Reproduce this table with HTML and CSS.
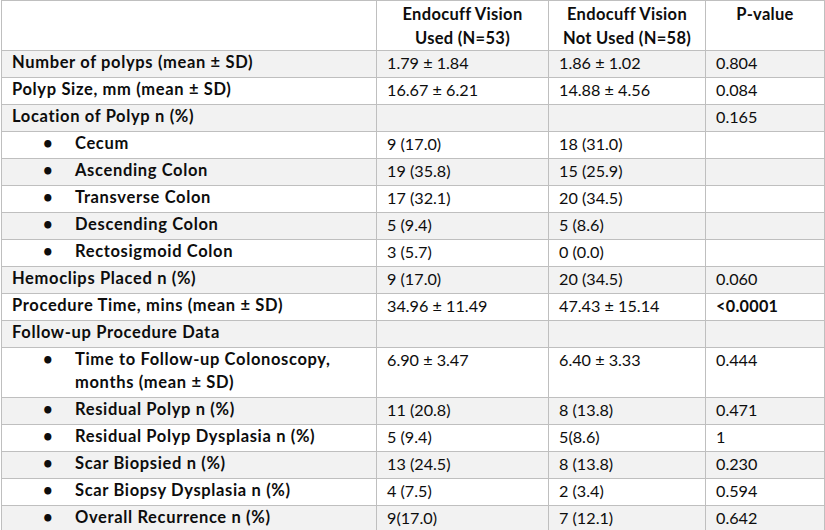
FILE: index.html
```html
<!DOCTYPE html>
<html>
<head>
<meta charset="utf-8">
<link rel="stylesheet" href="styles.css">
</head>
<body>
<table class="tbl">
  <colgroup>
    <col class="c1"><col class="c2"><col class="c3"><col class="c4">
  </colgroup>
  <thead>
    <tr class="head">
      <th></th>
      <th>Endocuff Vision<br>Used (N=53)</th>
      <th>Endocuff Vision<br>Not Used (N=58)</th>
      <th class="pv">P-value</th>
    </tr>
  </thead>
  <tbody>
    <tr class="alt"><td class="lbl">Number of polyps (mean ± SD)</td><td>1.79 ± 1.84</td><td>1.86 ± 1.02</td><td>0.804</td></tr>
    <tr><td class="lbl">Polyp Size, mm (mean ± SD)</td><td>16.67 ± 6.21</td><td>14.88 ± 4.56</td><td>0.084</td></tr>
    <tr class="alt"><td class="lbl">Location of Polyp n (%)</td><td></td><td></td><td>0.165</td></tr>
    <tr><td class="lbl"><div class="item"><span class="dot">•</span><span>Cecum</span></div></td><td>9 (17.0)</td><td>18 (31.0)</td><td></td></tr>
    <tr class="alt"><td class="lbl"><div class="item"><span class="dot">•</span><span>Ascending Colon</span></div></td><td>19 (35.8)</td><td>15 (25.9)</td><td></td></tr>
    <tr><td class="lbl"><div class="item"><span class="dot">•</span><span>Transverse Colon</span></div></td><td>17 (32.1)</td><td>20 (34.5)</td><td></td></tr>
    <tr class="alt"><td class="lbl"><div class="item"><span class="dot">•</span><span>Descending Colon</span></div></td><td>5 (9.4)</td><td>5 (8.6)</td><td></td></tr>
    <tr><td class="lbl"><div class="item"><span class="dot">•</span><span>Rectosigmoid Colon</span></div></td><td>3 (5.7)</td><td>0 (0.0)</td><td></td></tr>
    <tr class="alt"><td class="lbl">Hemoclips Placed n (%)</td><td>9 (17.0)</td><td>20 (34.5)</td><td>0.060</td></tr>
    <tr><td class="lbl">Procedure Time, mins (mean ± SD)</td><td>34.96 ± 11.49</td><td>47.43 ± 15.14</td><td class="b">&lt;0.0001</td></tr>
    <tr class="alt"><td class="lbl">Follow-up Procedure Data</td><td></td><td></td><td></td></tr>
    <tr><td class="lbl"><div class="item"><span class="dot">•</span><span>Time to Follow-up Colonoscopy,<br>months (mean ± SD)</span></div></td><td>6.90 ± 3.47</td><td>6.40 ± 3.33</td><td>0.444</td></tr>
    <tr class="alt"><td class="lbl"><div class="item"><span class="dot">•</span><span>Residual Polyp n (%)</span></div></td><td>11 (20.8)</td><td>8 (13.8)</td><td>0.471</td></tr>
    <tr><td class="lbl"><div class="item"><span class="dot">•</span><span>Residual Polyp Dysplasia n (%)</span></div></td><td>5 (9.4)</td><td>5(8.6)</td><td>1</td></tr>
    <tr class="alt"><td class="lbl"><div class="item"><span class="dot">•</span><span>Scar Biopsied n (%)</span></div></td><td>13 (24.5)</td><td>8 (13.8)</td><td>0.230</td></tr>
    <tr><td class="lbl"><div class="item"><span class="dot">•</span><span>Scar Biopsy Dysplasia n (%)</span></div></td><td>4 (7.5)</td><td>2 (3.4)</td><td>0.594</td></tr>
    <tr class="alt"><td class="lbl"><div class="item"><span class="dot">•</span><span>Overall Recurrence n (%)</span></div></td><td>9(17.0)</td><td>7 (12.1)</td><td>0.642</td></tr>
  </tbody>
</table>
</body>
</html>
```
FILE: styles.css
```css
html, body {
  margin: 0;
  padding: 0;
  background: #ffffff;
}
body {
  padding: 0 0 0 1px;
  font-family: Lato, "Open Sans", sans-serif;
  font-size: 16px;
  color: #0d0d0d;
}
.tbl {
  border-collapse: collapse;
  table-layout: fixed;
  width: 823px;
}
.c1 { width: 375px; }
.c2 { width: 172px; }
.c3 { width: 157px; }
.c4 { width: 119px; }
.tbl th,
.tbl td {
  border: 1px solid #bfbfbf;
  padding: 0 10px 3px 10px;
  line-height: 23px;
  text-align: left;
  vertical-align: top;
  font-weight: normal;
  font-size: 16.2px;
}
.tbl th {
  font-weight: bold;
  text-align: center;
  padding-top: 1px;
  padding-bottom: 0;
  line-height: 24px;
  font-size: 16.5px;
  letter-spacing: 0.3px;
}
.tbl tr.alt td {
  background: #f2f2f2;
}
.tbl td.lbl {
  font-weight: bold;
  font-size: 16.5px;
  letter-spacing: 0.65px;
}
.tbl td.b {
  font-weight: bold;
  letter-spacing: 0.3px;
}
.item {
  display: flex;
  padding-left: 31px;
}
.dot {
  width: 32px;
  flex: none;
  letter-spacing: 0;
}
```
